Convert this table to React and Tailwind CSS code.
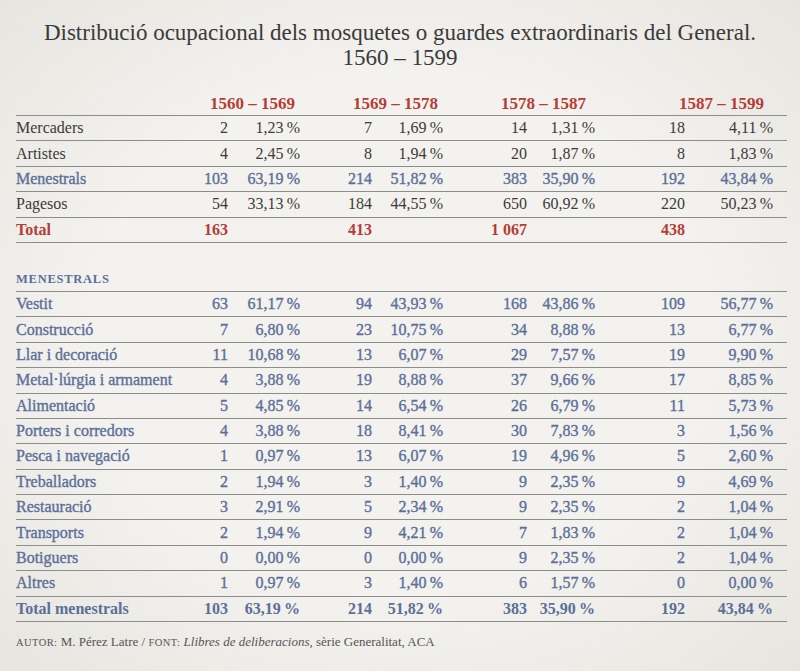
import React from 'react';

const serif = { fontFamily: '"Liberation Serif", "DejaVu Serif", serif' };

const cols = 'grid w-[771px] grid-cols-[174px_38px_72px_72px_71px_84px_68px_90px_88px_14px]';

const periods = ['1560 – 1569', '1569 – 1578', '1578 – 1587', '1587 – 1599'];

const general = [
  { label: 'Mercaders', kind: 'plain', v: [['2', '1,23'], ['7', '1,69'], ['14', '1,31'], ['18', '4,11']] },
  { label: 'Artistes', kind: 'plain', v: [['4', '2,45'], ['8', '1,94'], ['20', '1,87'], ['8', '1,83']] },
  { label: 'Menestrals', kind: 'blue', v: [['103', '63,19'], ['214', '51,82'], ['383', '35,90'], ['192', '43,84']] },
  { label: 'Pagesos', kind: 'plain', v: [['54', '33,13'], ['184', '44,55'], ['650', '60,92'], ['220', '50,23']] },
  { label: 'Total', kind: 'red', v: [['163', ''], ['413', ''], ['1 067', ''], ['438', '']] }
];

const menestrals = [
  { label: 'Vestit', v: [['63', '61,17'], ['94', '43,93'], ['168', '43,86'], ['109', '56,77']] },
  { label: 'Construcció', v: [['7', '6,80'], ['23', '10,75'], ['34', '8,88'], ['13', '6,77']] },
  { label: 'Llar i decoració', v: [['11', '10,68'], ['13', '6,07'], ['29', '7,57'], ['19', '9,90']] },
  { label: 'Metal·lúrgia i armament', v: [['4', '3,88'], ['19', '8,88'], ['37', '9,66'], ['17', '8,85']] },
  { label: 'Alimentació', v: [['5', '4,85'], ['14', '6,54'], ['26', '6,79'], ['11', '5,73']] },
  { label: 'Porters i corredors', v: [['4', '3,88'], ['18', '8,41'], ['30', '7,83'], ['3', '1,56']] },
  { label: 'Pesca i navegació', v: [['1', '0,97'], ['13', '6,07'], ['19', '4,96'], ['5', '2,60']] },
  { label: 'Treballadors', v: [['2', '1,94'], ['3', '1,40'], ['9', '2,35'], ['9', '4,69']] },
  { label: 'Restauració', v: [['3', '2,91'], ['5', '2,34'], ['9', '2,35'], ['2', '1,04']] },
  { label: 'Transports', v: [['2', '1,94'], ['9', '4,21'], ['7', '1,83'], ['2', '1,04']] },
  { label: 'Botiguers', v: [['0', '0,00'], ['0', '0,00'], ['9', '2,35'], ['2', '1,04']] },
  { label: 'Altres', v: [['1', '0,97'], ['3', '1,40'], ['6', '1,57'], ['0', '0,00']] }
];

const kindClass = {
  plain: 'text-[#3b3b3b]',
  blue: 'text-[#5b6f98] [-webkit-text-stroke:0.35px_#5b6f98]',
  red: 'text-[#b63c36] font-bold',
  blueBold: 'text-[#5b6f98] font-bold'
};

const Row = ({ label, v, kind }) => (
  <div className={`${cols} h-[25.4px] items-center border-b border-[#8d8d8b] text-[16px] ${kindClass[kind]}`}>
    <div className="whitespace-nowrap">{label}</div>
    {v.map(([n, p], i) => (
      <React.Fragment key={i}>
        <div className="text-right">{n}</div>
        <div className="text-right">{p ? `${p}\u2009%` : ''}</div>
      </React.Fragment>
    ))}
    <div />
  </div>
);

export default function App() {
  return (
    <div
      style={serif}
      className="w-[800px] h-[671px] overflow-hidden bg-[radial-gradient(ellipse_at_center,#f3f2ee_55%,#e6e5e0_100%)] text-[#3b3b3b]"
    >
      {/* Title */}
      <div className="pt-[20px] text-center text-[23px] leading-[25px] text-[#3a3a3a]">
        <div>Distribució ocupacional dels mosquetes o guardes extraordinaris del General.</div>
        <div>1560 – 1599</div>
      </div>

      <div className="pl-[16px] pt-[21px]">
        {/* Period header */}
        <div className={`${cols} h-[25px] items-center border-b border-[#8d8d8b] text-[17px] font-bold text-[#b63c36]`}>
          <div />
          {periods.map((p, i) => (
            <div key={p} className={`col-span-2 text-right ${i < 2 ? 'pr-[5px]' : 'pr-[9px]'}`}>
              {p}
            </div>
          ))}
          <div />
        </div>

        {general.map((r) => (
          <Row key={r.label} {...r} />
        ))}

        {/* Menestrals section */}
        <div className="h-[49px] flex items-end pb-[2px] border-b border-[#8d8d8b] w-[771px]">
          <span className="text-[12.5px] font-bold tracking-[0.06em] uppercase text-[#5b6f98]">Menestrals</span>
        </div>

        {menestrals.map((r) => (
          <Row key={r.label} {...r} kind="blue" />
        ))}
        <Row label="Total menestrals" kind="blueBold" v={[['103', '63,19'], ['214', '51,82'], ['383', '35,90'], ['192', '43,84']]} />

        {/* Source */}
        <div className="pt-[10px] text-[13px] text-[#555]">
          <span className="text-[10.5px] uppercase tracking-[0.04em]">Autor:</span> M. Pérez Latre /{' '}
          <span className="text-[10.5px] uppercase tracking-[0.04em]">Font:</span>{' '}
          <em>Llibres de deliberacions,</em> sèrie Generalitat, ACA
        </div>
      </div>
    </div>
  );
}
